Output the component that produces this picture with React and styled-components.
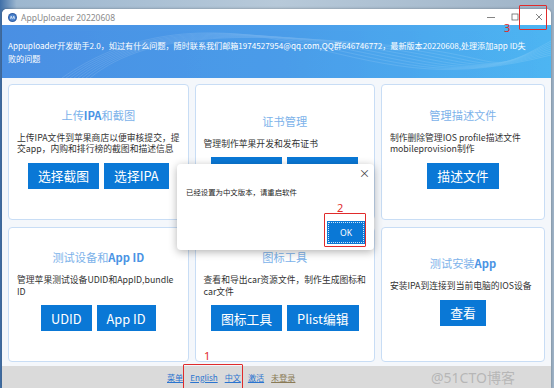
import React from 'react'
import styled, { createGlobalStyle } from 'styled-components'

const GlobalStyle = createGlobalStyle`
  html, body {
    margin: 0;
    padding: 0;
  }
  body {
    font-family: "Noto Sans CJK SC", "Noto Sans", sans-serif;
  }
`

const cards = [
  {
    title: '上传', bold: 'IPA', tail: '和截图',
    desc: ['上传IPA文件到苹果商店以便审核提交，提', '交app，内购和排行榜的截图和描述信息'],
    buttons: ['选择截图', '选择IPA'],
  },
  {
    title: '证书管理',
    desc: ['管理制作苹果开发和发布证书'],
    buttons: ['开发证书', '发布证书'],
  },
  {
    title: '管理描述文件',
    desc: ['制作删除管理IOS profile描述文件', 'mobileprovision制作'],
    buttons: ['描述文件'],
  },
  {
    title: '测试设备和', bold: 'App ID',
    desc: ['管理苹果测试设备UDID和AppID,bundle', 'ID'],
    buttons: ['UDID', 'App ID'],
  },
  {
    title: '图标工具',
    desc: ['查看和导出car资源文件，制作生成图标和', 'car文件'],
    buttons: ['图标工具', 'Plist编辑'],
  },
  {
    title: '测试安装', bold: 'App',
    desc: ['安装IPA到连接到当前电脑的IOS设备'],
    buttons: ['查看'],
  },
]

const links = [
  { label: '菜单' },
  { label: 'English' },
  { label: '中文' },
  { label: '激活' },
  { label: '未登录', muted: true },
]

const AppIcon = () => (
  <svg width="9" height="9" viewBox="0 0 10 10">
    <circle cx="5" cy="5" r="5" fill="#2f5fa8" />
    <circle cx="5" cy="5" r="3.6" fill="#4f86cf" />
    <path d="M2.6 6.4 L3.6 3.6 L4.6 6.4 M5.4 6.4 L6.4 3.6 L7.4 6.4" stroke="#fff" strokeWidth="0.8" fill="none" />
  </svg>
)

const Waves = () => (
  <WaveSvg viewBox="0 0 549 53" preserveAspectRatio="none">
    {[0, 4, 8, 12, 16, 20, 24, 28].map((o) => (
      <path
        key={o}
        d={`M${60 + o} 53 C ${120 + o} ${10 - o / 4}, ${200 + o * 2} ${-5 + o / 2}, ${300 + o * 3} 20 S ${450 + o} 55, 549 ${30 - o / 2}`}
        stroke="#fff"
        strokeWidth="0.6"
        fill="none"
      />
    ))}
  </WaveSvg>
)

const App = () => {
  return (
    <Desktop>
      <GlobalStyle />
      <Window>
        <TitleBar>
          <AppIcon />
          <TitleText>AppUploader 20220608</TitleText>
          <WinButtons>
            <WinButton>
              <svg width="10" height="10" viewBox="0 0 10 10">
                <path d="M1 5.5 H9" stroke="#666" strokeWidth="0.8" />
              </svg>
            </WinButton>
            <WinButton>
              <svg width="10" height="10" viewBox="0 0 10 10">
                <rect x="2" y="2" width="6" height="6" stroke="#666" strokeWidth="0.8" fill="none" />
              </svg>
            </WinButton>
            <WinButton>
              <svg width="10" height="10" viewBox="0 0 10 10">
                <path d="M2 2 L8 8 M8 2 L2 8" stroke="#666" strokeWidth="0.8" />
              </svg>
            </WinButton>
          </WinButtons>
        </TitleBar>
        <Header>
          <Waves />
          <HeaderText>
            Appuploader开发助手2.0，如过有什么问题，随时联系我们邮箱1974527954@qq.com,QQ群646746772，最新版本20220608,处理添加app ID失
            <br />
            败的问题
          </HeaderText>
        </Header>
        <Grid>
          {cards.map((card, i) => (
            <Card key={i}>
              <CardTitle>
                {card.title}
                {card.bold && <Bold>{card.bold}</Bold>}
                {card.tail}
              </CardTitle>
              <Desc>
                {card.desc.map((line, j) => (
                  <DescLine key={j}>{line}</DescLine>
                ))}
              </Desc>
              <ButtonRow>
                {card.buttons.map((b) => (
                  <ActionButton key={b}>{b}</ActionButton>
                ))}
              </ButtonRow>
            </Card>
          ))}
        </Grid>
        <Footer>
          {links.map((l) => (
            <FooterLink key={l.label} $muted={l.muted}>{l.label}</FooterLink>
          ))}
        </Footer>
      </Window>

      <Dialog>
        <DialogClose>×</DialogClose>
        <DialogMessage>已经设置为中文版本，请重启软件</DialogMessage>
        <DialogActions>
          <OkButton>OK</OkButton>
        </DialogActions>
      </Dialog>

      <Mark style={{ left: 183, top: 364, width: 60, height: 26 }} />
      <MarkNum style={{ left: 204, top: 350 }}>1</MarkNum>
      <Mark style={{ left: 324, top: 213, width: 42, height: 34 }} />
      <MarkNum style={{ left: 337, top: 202 }}>2</MarkNum>
      <Mark style={{ left: 519, top: 5, width: 28, height: 25 }} />
      <MarkNum style={{ left: 504, top: 22 }}>3</MarkNum>

      <Watermark>@51CTO博客</Watermark>
    </Desktop>
  )
}

const Desktop = styled.div`
  position: relative;
  width: 554px;
  height: 388px;
  box-sizing: border-box;
  padding: 9px 3px 0 2px;
  display: flex;
  overflow: hidden;
  background: linear-gradient(90deg, #3f6fa8 0%, #9db7cf 3%, #b7c9d9 50%, #9fb4c8 100%);
`

const Window = styled.div`
  flex: 1;
  display: flex;
  flex-direction: column;
  background: #f4f7fb;
  border-radius: 5px 5px 0 0;
  overflow: hidden;
  box-shadow: 0 0 3px rgba(0, 0, 0, 0.35);
`

const TitleBar = styled.div`
  height: 16px;
  flex-shrink: 0;
  display: flex;
  align-items: center;
  padding-left: 6px;
  background: #fff;
`

const TitleText = styled.span`
  margin-left: 4px;
  font-size: 8.5px;
  color: #8a8a8a;
  font-family: "Noto Sans", "Noto Sans CJK SC", sans-serif;
`

const WinButtons = styled.div`
  margin-left: auto;
  display: flex;
  height: 100%;
`

const WinButton = styled.div`
  width: 24px;
  display: flex;
  align-items: center;
  justify-content: center;
`

const Header = styled.div`
  position: relative;
  height: 53px;
  flex-shrink: 0;
  display: flex;
  align-items: center;
  padding: 0 6px;
  background: linear-gradient(90deg, #4a8fe3 0%, #4b9eea 55%, #4db5f2 100%);
  overflow: hidden;
`

const WaveSvg = styled.svg`
  position: absolute;
  left: 0;
  top: 0;
  width: 100%;
  height: 100%;
  opacity: 0.18;
`

const HeaderText = styled.div`
  position: relative;
  font-size: 8.1px;
  line-height: 13px;
  color: #fff;
  white-space: nowrap;
`

const Grid = styled.div`
  flex: 1;
  display: grid;
  grid-template-columns: repeat(3, 1fr);
  grid-template-rows: 1fr 1fr;
  gap: 7px 6px;
  padding: 6px 6px 4px 6px;
`

const Card = styled.div`
  display: flex;
  flex-direction: column;
  align-items: center;
  justify-content: center;
  background: #fff;
  border: 1px solid #c8ddf5;
  border-radius: 4px;
  padding: 0 8px 7px;
`

const CardTitle = styled.div`
  font-size: 11.2px;
  line-height: 14px;
  color: #7cb2ea;
  margin-bottom: 10px;
`

const Bold = styled.span`
  font-weight: 700;
  color: #4a93e4;
`

const Desc = styled.div`
  align-self: stretch;
  font-size: 8.8px;
  line-height: 11.5px;
  color: #333;
  margin-bottom: 8px;
`

const DescLine = styled.div`
  white-space: nowrap;
`

const ButtonRow = styled.div`
  display: flex;
  gap: 5px;
`

const ActionButton = styled.div`
  height: 26px;
  padding: 0 10px;
  display: flex;
  align-items: center;
  justify-content: center;
  background: #0a78d6;
  color: #fff;
  font-size: 12.8px;
`

const Footer = styled.div`
  height: 22px;
  flex-shrink: 0;
  display: flex;
  align-items: center;
  gap: 7px;
  padding-left: 165px;
  background: #dadada;
`

const FooterLink = styled.span`
  font-size: 8.1px;
  color: ${(p) => (p.$muted ? '#8a7a55' : '#2a74cf')};
  text-decoration: underline;
`

const Dialog = styled.div`
  position: absolute;
  left: 177px;
  top: 164px;
  width: 197px;
  height: 86px;
  box-sizing: border-box;
  background: #fff;
  border-radius: 4px;
  box-shadow: 0 2px 8px rgba(0, 0, 0, 0.3);
  display: flex;
  flex-direction: column;
  padding: 0 9px 6px 9px;
`

const DialogClose = styled.div`
  position: absolute;
  right: 4px;
  top: 1px;
  font-size: 11px;
  color: #444;
`

const DialogMessage = styled.div`
  margin-top: 22px;
  font-size: 7.4px;
  line-height: 12px;
  color: #222;
`

const DialogActions = styled.div`
  margin-top: auto;
  display: flex;
  justify-content: flex-end;
`

const OkButton = styled.div`
  width: 38px;
  height: 23px;
  box-sizing: border-box;
  display: flex;
  align-items: center;
  justify-content: center;
  background: #0a78d6;
  color: #fff;
  font-size: 8.6px;
  font-family: "Noto Sans", sans-serif;
  outline: 1px dotted rgba(255, 255, 255, 0.8);
  outline-offset: -2px;
`

const Mark = styled.div`
  position: absolute;
  box-sizing: border-box;
  border: 1.5px solid #e02b2b;
  border-radius: 1px;
`

const MarkNum = styled.div`
  position: absolute;
  font-size: 11px;
  line-height: 12px;
  color: #e02b2b;
  font-family: "Noto Sans", sans-serif;
`

const Watermark = styled.div`
  position: absolute;
  left: 431px;
  top: 367px;
  font-size: 14px;
  color: rgba(170, 170, 170, 0.75);
  font-family: "Noto Sans", "Noto Sans CJK SC", sans-serif;
`

export default App
